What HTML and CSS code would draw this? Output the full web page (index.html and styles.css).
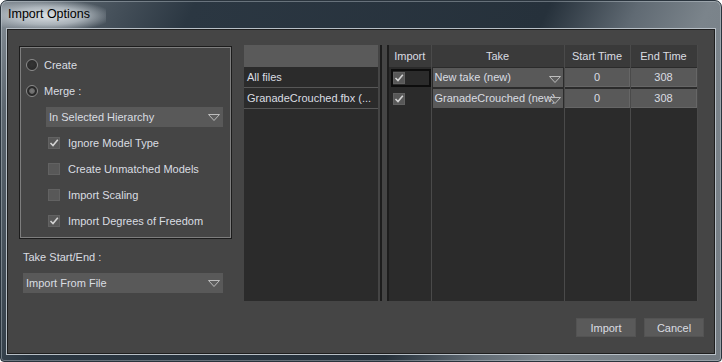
FILE: index.html
```html
<!DOCTYPE html>
<html lang="en">
<head>
  <meta charset="UTF-8">
  <title>Import Options</title>
  <link rel="stylesheet" href="styles.css">
</head>
<body>
  <div class="window">
    <div class="titlebar"><span class="title">Import Options</span></div>
    <div class="client">
      <div class="main">
        <div class="left">
          <div class="groupbox">
            <div class="radio-row"><span class="radio"></span>Create</div>
            <div class="radio-row"><span class="radio checked"></span>Merge :</div>
            <div class="dropdown nested">
              <span>In Selected Hierarchy</span>
              <svg class="arrow" width="12" height="7" viewBox="0 0 12 7"><path d="M0.5 0.5 H11.5 L6 6.5 Z" fill="#5e5e5e" stroke="#bdbdbd"/></svg>
            </div>
            <div class="check-row">
              <span class="checkbox"><svg width="12" height="12" viewBox="0 0 12 12"><path d="M2.5 6 L5 8.5 L9.8 2.8" fill="none" stroke="#d4d4d4" stroke-width="1.6"/></svg></span>
              Ignore Model Type
            </div>
            <div class="check-row"><span class="checkbox"></span>Create Unmatched Models</div>
            <div class="check-row"><span class="checkbox"></span>Import Scaling</div>
            <div class="check-row">
              <span class="checkbox"><svg width="12" height="12" viewBox="0 0 12 12"><path d="M2.5 6 L5 8.5 L9.8 2.8" fill="none" stroke="#d4d4d4" stroke-width="1.6"/></svg></span>
              Import Degrees of Freedom
            </div>
          </div>
          <div class="field-label">Take Start/End :</div>
          <div class="dropdown start-end">
            <span>Import From File</span>
            <svg class="arrow" width="12" height="7" viewBox="0 0 12 7"><path d="M0.5 0.5 H11.5 L6 6.5 Z" fill="#5e5e5e" stroke="#bdbdbd"/></svg>
          </div>
        </div>

        <div class="file-list">
          <div class="list-header"></div>
          <div class="list-item">All files</div>
          <div class="list-item">GranadeCrouched.fbx (...</div>
        </div>

        <div class="splitter"></div>

        <table class="takes">
          <colgroup>
            <col class="col-import">
            <col class="col-take">
            <col class="col-start">
            <col class="col-end">
          </colgroup>
          <thead>
            <tr><th>Import</th><th>Take</th><th>Start Time</th><th>End Time</th></tr>
          </thead>
          <tbody>
            <tr>
              <td>
                <div class="cell-focus">
                  <span class="checkbox"><svg width="12" height="12" viewBox="0 0 12 12"><path d="M2.5 6 L5 8.5 L9.8 2.8" fill="none" stroke="#d4d4d4" stroke-width="1.6"/></svg></span>
                </div>
              </td>
              <td>
                <div class="cell-combo">
                  <span>New take (new)</span>
                  <svg class="arrow" width="12" height="7" viewBox="0 0 12 7"><path d="M0.5 0.5 H11.5 L6 6.5 Z" fill="#5e5e5e" stroke="#bdbdbd"/></svg>
                </div>
              </td>
              <td><div class="cell-num">0</div></td>
              <td><div class="cell-num">308</div></td>
            </tr>
            <tr>
              <td>
                <div class="cell-check">
                  <span class="checkbox"><svg width="12" height="12" viewBox="0 0 12 12"><path d="M2.5 6 L5 8.5 L9.8 2.8" fill="none" stroke="#d4d4d4" stroke-width="1.6"/></svg></span>
                </div>
              </td>
              <td>
                <div class="cell-combo">
                  <span>GranadeCrouched (new)</span>
                  <svg class="arrow" width="12" height="7" viewBox="0 0 12 7"><path d="M0.5 0.5 H11.5 L6 6.5 Z" fill="#5e5e5e" stroke="#bdbdbd"/></svg>
                </div>
              </td>
              <td><div class="cell-num">0</div></td>
              <td><div class="cell-num">308</div></td>
            </tr>
            <tr class="filler"><td></td><td></td><td></td><td></td></tr>
          </tbody>
        </table>
      </div>

      <div class="buttons">
        <button class="btn">Import</button>
        <button class="btn">Cancel</button>
      </div>
    </div>
  </div>
</body>
</html>
```

FILE: styles.css
```css
html, body {
  margin: 0;
  background: #ffffff;
  font-family: 'Liberation Sans', Arial, sans-serif;
  font-size: 11px;
  color: #dadde2;
}
.window {
  width: 722px;
  height: 362px;
  box-sizing: border-box;
  border: 1px solid #2a343d;
  border-radius: 7px 7px 4px 4px;
  background: linear-gradient(115deg, #8a939b 0%, #5c666f 6%, #2b3742 22%, #26313b 62%, #606a73 72%, #7b848b 80%, #737b82 100%);
  box-shadow: inset 0 0 0 1px rgba(220, 228, 235, 0.35);
  display: flex;
  flex-direction: column;
  overflow: hidden;
}
.titlebar {
  height: 28px;
  flex: none;
}
.title {
  display: inline-block;
  box-sizing: border-box;
  height: 27px;
  padding: 6px 16px 0 7px;
  font-size: 12.5px;
  line-height: 15px;
  color: #000000;
  background: radial-gradient(ellipse 62% 60% at 45% 55%, rgba(226, 231, 235, 0.95) 0%, rgba(196, 204, 210, 0.75) 55%, rgba(196, 204, 210, 0) 100%);
}
.client {
  flex: 1;
  margin: 0 6px 7px 6px;
  box-sizing: border-box;
  border: 1px solid #1e1e1e;
  box-shadow: 0 0 0 1px #b7bfc6;
  background: #454545;
  padding: 15px 10px 0 11px;
  display: flex;
  flex-direction: column;
}
.main {
  display: flex;
  height: 256px;
  padding-right: 7px;
}

/* left column */
.left {
  width: 213px;
  flex: none;
}
.groupbox {
  margin-top: 1px;
  height: 193px;
  box-sizing: border-box;
  border: 1px solid #1c1c1c;
  box-shadow: inset 0 0 0 1px #7e7e7e;
  padding: 5px 8px 0 6px;
}
.radio-row {
  display: flex;
  align-items: center;
  gap: 6px;
  height: 26px;
}
.radio {
  width: 12px;
  height: 12px;
  box-sizing: border-box;
  border-radius: 50%;
  border: 1px solid #8c8c8c;
  background: radial-gradient(circle at 50% 45%, #353535, #262626);
}
.radio.checked {
  background: radial-gradient(circle, #7a7a7a 0, #6c6c6c 2.4px, #2a2a2a 3.2px);
}
.check-row {
  display: flex;
  align-items: center;
  gap: 8px;
  height: 26px;
  padding-left: 22px;
}
.checkbox {
  width: 12px;
  height: 12px;
  flex: none;
  box-sizing: border-box;
  background: #585858;
  box-shadow: inset 0 0 0 1px #626262;
  display: flex;
}
.dropdown {
  position: relative;
  height: 20px;
  box-sizing: border-box;
  background: #595959;
  padding: 0 3px;
  display: flex;
  align-items: center;
  white-space: nowrap;
}
.dropdown.nested {
  margin: 3px 0 3px 20px;
}
.dropdown.start-end {
  margin: 8px 0 0 4px;
  width: 200px;
}
.arrow {
  position: absolute;
  right: 3px;
  top: 7px;
}
.field-label {
  margin: 10px 0 0 4px;
  line-height: 16px;
}

/* file list */
.file-list {
  width: 134px;
  flex: none;
  margin-left: 12px;
  background: #2b2b2b;
}
.list-header {
  height: 22px;
  background: #5a5a5a;
}
.list-item {
  height: 20px;
  line-height: 20px;
  padding-left: 3px;
  border-bottom: 1px solid #575757;
  white-space: nowrap;
  overflow: hidden;
}
.splitter {
  width: 9px;
  flex: none;
  margin-left: 2px;
  box-sizing: border-box;
  border-left: 2px solid #1d1d1d;
  border-right: 2px solid #1d1d1d;
}

/* takes table */
.takes {
  width: 308px;
  height: 256px;
  flex: none;
  table-layout: fixed;
  border-collapse: collapse;
  background: #2b2b2b;
}
.col-import { width: 42px; }
.col-take { width: 133px; }
.col-start { width: 66px; }
.col-end { width: 67px; }
.takes th,
.takes td {
  padding: 0;
  border-right: 1px solid #4a4a4a;
}
.takes th {
  height: 22px;
  background: #3a3a3a;
  font-weight: normal;
  text-align: center;
}
.takes td {
  height: 21px;
  vertical-align: top;
}
.takes .filler td {
  height: auto;
}
.cell-focus {
  margin: 2px 0 0 2px;
  height: 18px;
  box-sizing: border-box;
  border: 2px solid #0d0d0d;
  display: flex;
  align-items: center;
}
.cell-check {
  height: 21px;
  padding-left: 4px;
  display: flex;
  align-items: center;
}
.cell-combo {
  position: relative;
  margin: 1px;
  height: 19px;
  background: #595959;
  padding-left: 2px;
  line-height: 19px;
  white-space: nowrap;
  overflow: hidden;
}
.cell-combo .arrow {
  right: 2px;
  top: 8px;
}
.cell-num {
  margin: 1px 0;
  height: 19px;
  line-height: 19px;
  text-align: center;
  background: #595959;
  box-shadow: inset -1px -1px 0 #666666;
}

/* buttons */
.buttons {
  display: flex;
  justify-content: flex-end;
  gap: 8px;
  margin-top: 17px;
}
.btn {
  width: 60px;
  height: 19px;
  padding: 0;
  background: #5a5a5a;
  border: 1px solid #535353;
  color: #dadde2;
  font-family: 'Liberation Sans', Arial, sans-serif;
  font-size: 11px;
}
```
